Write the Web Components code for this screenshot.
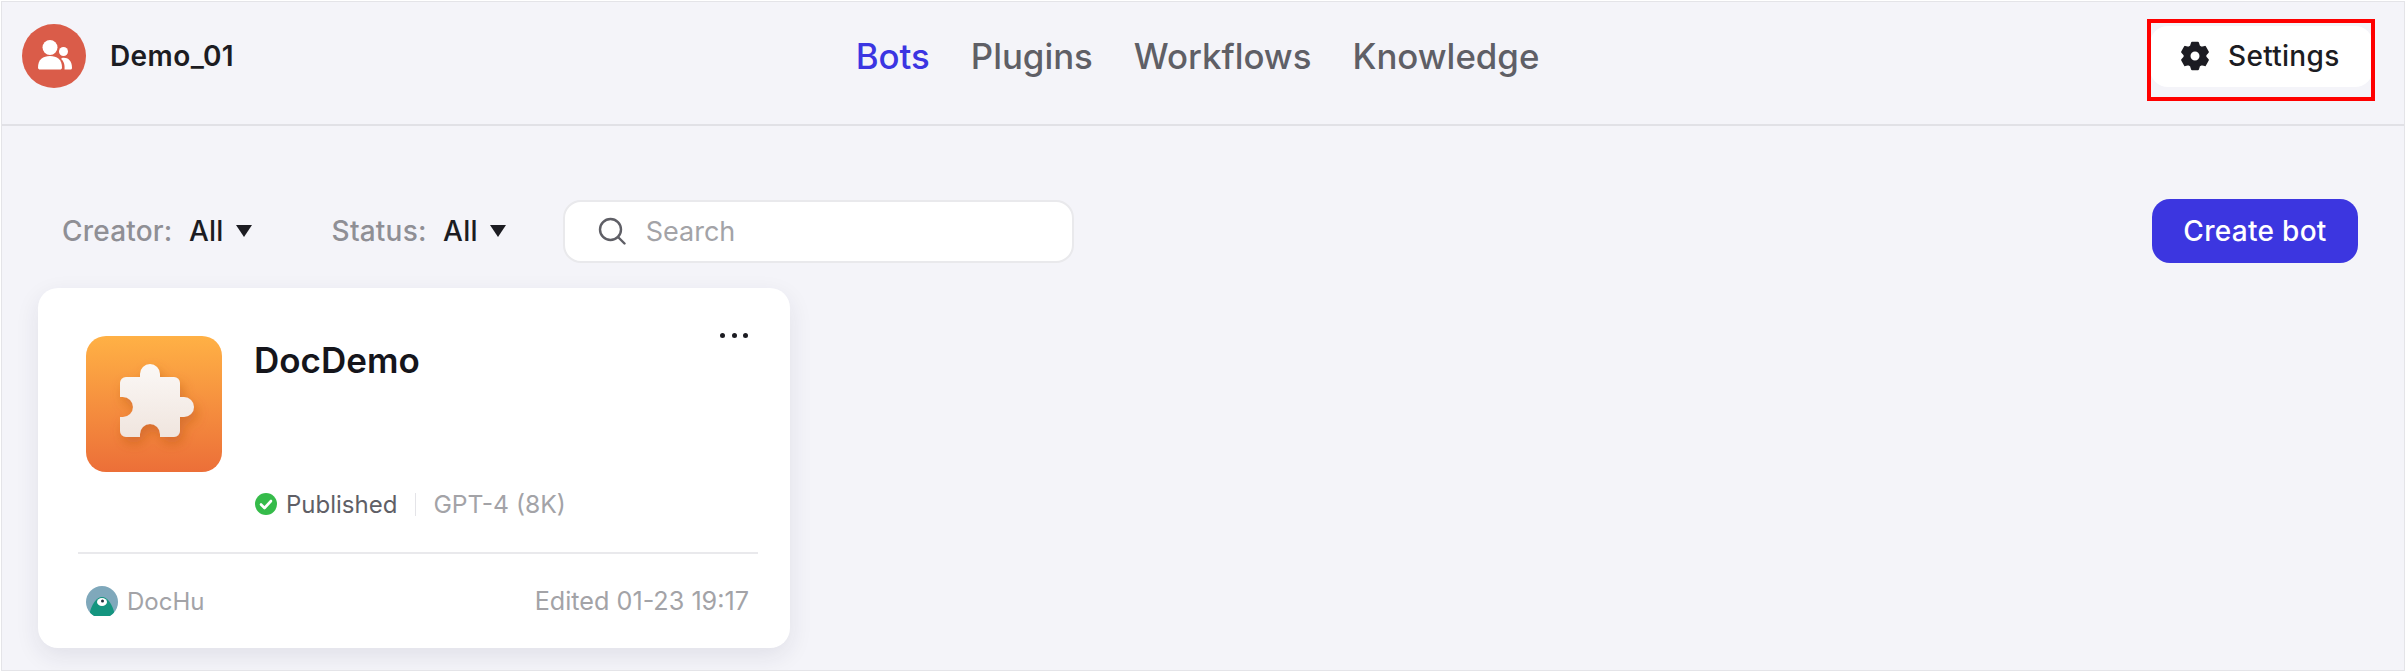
<!DOCTYPE html>
<html lang="en">
<head>
<meta charset="utf-8">
<title>Bots</title>
<style>
  html, body { margin: 0; background: #fff; }
  body { font-family: "Inter", "Liberation Sans", sans-serif; }
</style>
</head>
<body>
<app-shell>
  <top-bar></top-bar>
  <bot-toolbar></bot-toolbar>
  <bot-card name="DocDemo" status="Published" model="GPT-4 (8K)" author="DocHu" edited="Edited 01-23 19:17"></bot-card>
</app-shell>

<script>
class AppShell extends HTMLElement {
    constructor() {
        super();
        this.attachShadow({ mode: 'open' });
        this.shadowRoot.innerHTML = `
            <style>
                :host {
                    display: block;
                    box-sizing: border-box;
                    margin: 1px 1px 0 1px;
                    height: 670px;
                    background: #f4f4f9;
                    border: 1px solid #e4e4e8;
                    overflow: hidden;
                }
            </style>
            <slot></slot>
        `;
    }
}

function gearPath(cx, cy, outer, inner, hole) {
    // six flat teeth, hole is cut with evenodd
    let d = '';
    for (let i = 0; i < 6; i++) {
        const a = (i * 60 - 90) * Math.PI / 180;
        const pts = [[-0.40, inner], [-0.22, outer], [0.22, outer], [0.40, inner]];
        pts.forEach((p, j) => {
            const x = cx + p[1] * Math.cos(a + p[0]);
            const y = cy + p[1] * Math.sin(a + p[0]);
            d += `${i === 0 && j === 0 ? 'M' : 'L'}${x.toFixed(2)} ${y.toFixed(2)} `;
        });
    }
    d += `Z M${cx + hole} ${cy} A${hole} ${hole} 0 1 0 ${cx - hole} ${cy} A${hole} ${hole} 0 1 0 ${cx + hole} ${cy} Z`;
    return d;
}

class TopBar extends HTMLElement {
    constructor() {
        super();
        this.attachShadow({ mode: 'open' });
        this.shadowRoot.innerHTML = `
            <style>
                :host {
                    display: grid;
                    grid-template-columns: 1fr auto 1fr;
                    align-items: center;
                    box-sizing: border-box;
                    height: 124px;
                    padding: 0 31px 14px 20px;
                    border-bottom: 2px solid #e1e1e6;
                    font-family: "Inter", "Liberation Sans", sans-serif;
                }
                .space { display: flex; align-items: center; gap: 24px; }
                .avatar {
                    width: 64px; height: 64px; border-radius: 50%;
                    background: #da5c49;
                    display: flex; align-items: center; justify-content: center;
                }
                .name { font-size: 28px; font-weight: 600; letter-spacing: .4px; color: #1c1c22; }
                nav { display: flex; gap: 41px; font-size: 34.800px; font-weight: 500; color: #5f5f66; }
                nav .on { color: #3b35e2; }
                .settings {
                    justify-self: end;
                    position: relative;
                    box-sizing: border-box;
                    width: 223px; height: 61px;
                    display: flex; align-items: center; gap: 18px;
                    padding-left: 30px;
                    background: #fff;
                    border-radius: 18px;
                    font-size: 28px; font-weight: 500; letter-spacing: .3px; color: #1c1c22;
                }
                .settings svg { display: block; }
                .mark {
                    position: absolute;
                    left: -3px; top: -7px; right: -2px; bottom: -14px;
                    border: 4px solid #f00;
                }
            </style>
            <div class="space">
                <div class="avatar">
                    <svg width="64" height="64" viewBox="0 0 64 64" fill="#fff">
                        <g transform="translate(0 -2.500)">
                            <circle cx="28" cy="26" r="7.5"/>
                            <path d="M16 46c0-8 5-11.500 12-11.500s12 3.500 12 11.500c0 1.500-1 2-2 2H18c-1 0-2-.5-2-2z"/>
                            <circle cx="41.500" cy="30" r="4.500"/>
                            <path d="M40 36.500c5-1 10 2 10 9.500c0 1.500-.5 2-1.500 2H42.500c.5-4-.5-8.500-3.500-10.500z"/>
                        </g>
                    </svg>
                </div>
                <div class="name">Demo_01</div>
            </div>
            <nav>
                <span class="on">Bots</span>
                <span>Plugins</span>
                <span>Workflows</span>
                <span>Knowledge</span>
            </nav>
            <div class="settings">
                <svg width="30" height="30" viewBox="0 0 30 30"><path fill="#1c1c22" fill-rule="evenodd" stroke="#1c1c22" stroke-width="2" stroke-linejoin="round" d="${gearPath(15, 15, 13.5, 10.5, 5.5)}"/></svg>
                <span>Settings</span>
                <div class="mark"></div>
            </div>
        `;
    }
}

class FilterPick extends HTMLElement {
    constructor() {
        super();
        this.attachShadow({ mode: 'open' });
    }

    connectedCallback() {
        this.shadowRoot.innerHTML = `
            <style>
                :host {
                    display: flex; align-items: center;
                    font-size: 28px; font-weight: 500; letter-spacing: .2px;
                    color: #1c1c22;
                }
                .label { color: #8f8f95; margin-right: 16.500px; }
                svg { margin-left: 12px; display: block; }
            </style>
            <span class="label">${this.getAttribute('label')}</span>
            <span>${this.getAttribute('value')}</span>
            <svg width="16" height="12" viewBox="0 0 16 12"><path d="M0 0h16L8 12z" fill="#1c1c22"/></svg>
        `;
    }
}

class BotToolbar extends HTMLElement {
    constructor() {
        super();
        this.attachShadow({ mode: 'open' });
        this.shadowRoot.innerHTML = `
            <style>
                :host {
                    display: flex; align-items: center;
                    box-sizing: border-box;
                    height: 64px;
                    margin-top: 73px;
                    padding: 0 46px 0 60px;
                    font-family: "Inter", "Liberation Sans", sans-serif;
                }
                filter-pick + filter-pick { margin-left: 80px; }
                .search {
                    box-sizing: border-box;
                    width: 511px; height: 63px;
                    margin-left: 57px;
                    display: flex; align-items: center; gap: 20px;
                    padding-left: 33px;
                    background: #fff;
                    border: 2px solid #e9e9ec;
                    border-radius: 18px;
                    font-size: 27px; color: #a3a3a7;
                }
                .search svg { display: block; }
                .create {
                    margin-left: auto;
                    width: 206px; height: 64px;
                    display: flex; align-items: center; justify-content: center;
                    background: #3c36e0;
                    border-radius: 18px;
                    color: #fff;
                    font-size: 28px; font-weight: 500; letter-spacing: .3px;
                }
            </style>
            <filter-pick label="Creator:" value="All"></filter-pick>
            <filter-pick label="Status:" value="All"></filter-pick>
            <div class="search">
                <svg width="28" height="28" viewBox="0 0 28 28" fill="none" stroke="#5f5f66" stroke-width="2.400">
                    <circle cx="12.500" cy="12.500" r="10.500"/>
                    <path d="M20 20l6.500 6.500" stroke-linecap="round"/>
                </svg>
                <span>Search</span>
            </div>
            <div class="create">Create bot</div>
        `;
    }
}

class BotCard extends HTMLElement {
    constructor() {
        super();
        this.attachShadow({ mode: 'open' });
    }

    connectedCallback() {
        const attr = (n) => this.getAttribute(n);
        this.shadowRoot.innerHTML = `
            <style>
                :host {
                    display: block;
                    box-sizing: border-box;
                    position: relative;
                    width: 752px; height: 360px;
                    margin: 25px 0 0 36px;
                    padding: 48px 32px 0 48px;
                    background: #fff;
                    border-radius: 20px;
                    box-shadow: 0 8px 24px rgba(30, 30, 70, 0.09);
                    font-family: "Inter", "Liberation Sans", sans-serif;
                }
                .top { display: flex; gap: 32px; height: 136px; }
                .icon {
                    width: 136px; height: 136px; flex: none;
                    border-radius: 20px;
                    background: linear-gradient(#ffb145, #ec6f38);
                    display: block;
                }
                .title { font-size: 35px; font-weight: 600; color: #15151b; margin-top: 3px; }
                .more {
                    position: absolute; right: 42px; top: 45px;
                    display: flex; gap: 6.500px;
                }
                .more i { width: 5px; height: 5px; border-radius: 50%; background: #1c1c22; }
                .meta {
                    display: flex; align-items: center;
                    margin: 16px 0 0 169px;
                    height: 32px;
                    font-size: 24.700px; color: #a3a3a7;
                }
                .meta svg { display: block; margin-right: 9px; }
                .state { color: #5f5f66; font-size: 24px; }
                .sep { width: 1px; height: 23px; background: #e4e4e8; margin: 0 17px 0 18px; }
                .rule { height: 2px; background: #e9e9ec; margin: 32px 0 0 -8px; width: 680px; }
                .foot {
                    display: flex; align-items: center; justify-content: space-between;
                    margin-top: 32px;
                    width: 663px;
                    font-size: 25.200px; color: #a3a3a7;
                }
                .who { display: flex; align-items: center; gap: 9px; font-size: 24px; }
                .who svg { display: block; }
            </style>
            <div class="top">
                <svg class="icon" viewBox="0 0 136 136">
                    <defs>
                        <linearGradient id="piece" x1="0" y1="0" x2="0" y2="1">
                            <stop offset="0" stop-color="#fbf8f6"/>
                            <stop offset="1" stop-color="#f0e5de"/>
                        </linearGradient>
                        <filter id="soft" x="-30%" y="-30%" width="160%" height="160%">
                            <feDropShadow dx="3" dy="6" stdDeviation="6" flood-color="#b5521a" flood-opacity=".45"/>
                        </filter>
                    </defs>
                    <path fill="url(#piece)" filter="url(#soft)" d="M40 41H54V38A10 10 0 0 1 74 38V41H88A6 6 0 0 1 94 47V61H98A10 10 0 0 1 98 81H94V95A6 6 0 0 1 88 101H74V98A10 10 0 0 0 54 98V101H40A6 6 0 0 1 34 95V81H37A10 10 0 0 0 37 61H34V47A6 6 0 0 1 40 41Z"/>
                </svg>
                <div class="title">${attr('name')}</div>
            </div>
            <div class="more"><i></i><i></i><i></i></div>
            <div class="meta">
                <svg width="22" height="22" viewBox="0 0 22 22">
                    <circle cx="11" cy="11" r="11" fill="#35bb4a"/>
                    <path d="M6 11.500l3.500 3.500L16 8" fill="none" stroke="#fff" stroke-width="2.600" stroke-linecap="round" stroke-linejoin="round"/>
                </svg>
                <span class="state">${attr('status')}</span>
                <span class="sep"></span>
                <span>${attr('model')}</span>
            </div>
            <div class="rule"></div>
            <div class="foot">
                <div class="who">
                    <svg width="32" height="30" viewBox="0 0 32 30">
                        <defs><clipPath id="round"><circle cx="16" cy="16" r="16"/></clipPath></defs>
                        <g clip-path="url(#round)">
                            <rect width="32" height="30" fill="#7fa8bb"/>
                            <path d="M3 30C5 18 11 11 16 11s11 7 13 19z" fill="#14957f"/>
                            <ellipse cx="16" cy="16" rx="5" ry="4" fill="#fff"/>
                            <circle cx="16.500" cy="15" r="1.500" fill="#20303a"/>
                        </g>
                    </svg>
                    <span>${attr('author')}</span>
                </div>
                <span>${attr('edited')}</span>
            </div>
        `;
    }
}

customElements.define('app-shell', AppShell);
customElements.define('top-bar', TopBar);
customElements.define('filter-pick', FilterPick);
customElements.define('bot-toolbar', BotToolbar);
customElements.define('bot-card', BotCard);
</script>
</body>
</html>
